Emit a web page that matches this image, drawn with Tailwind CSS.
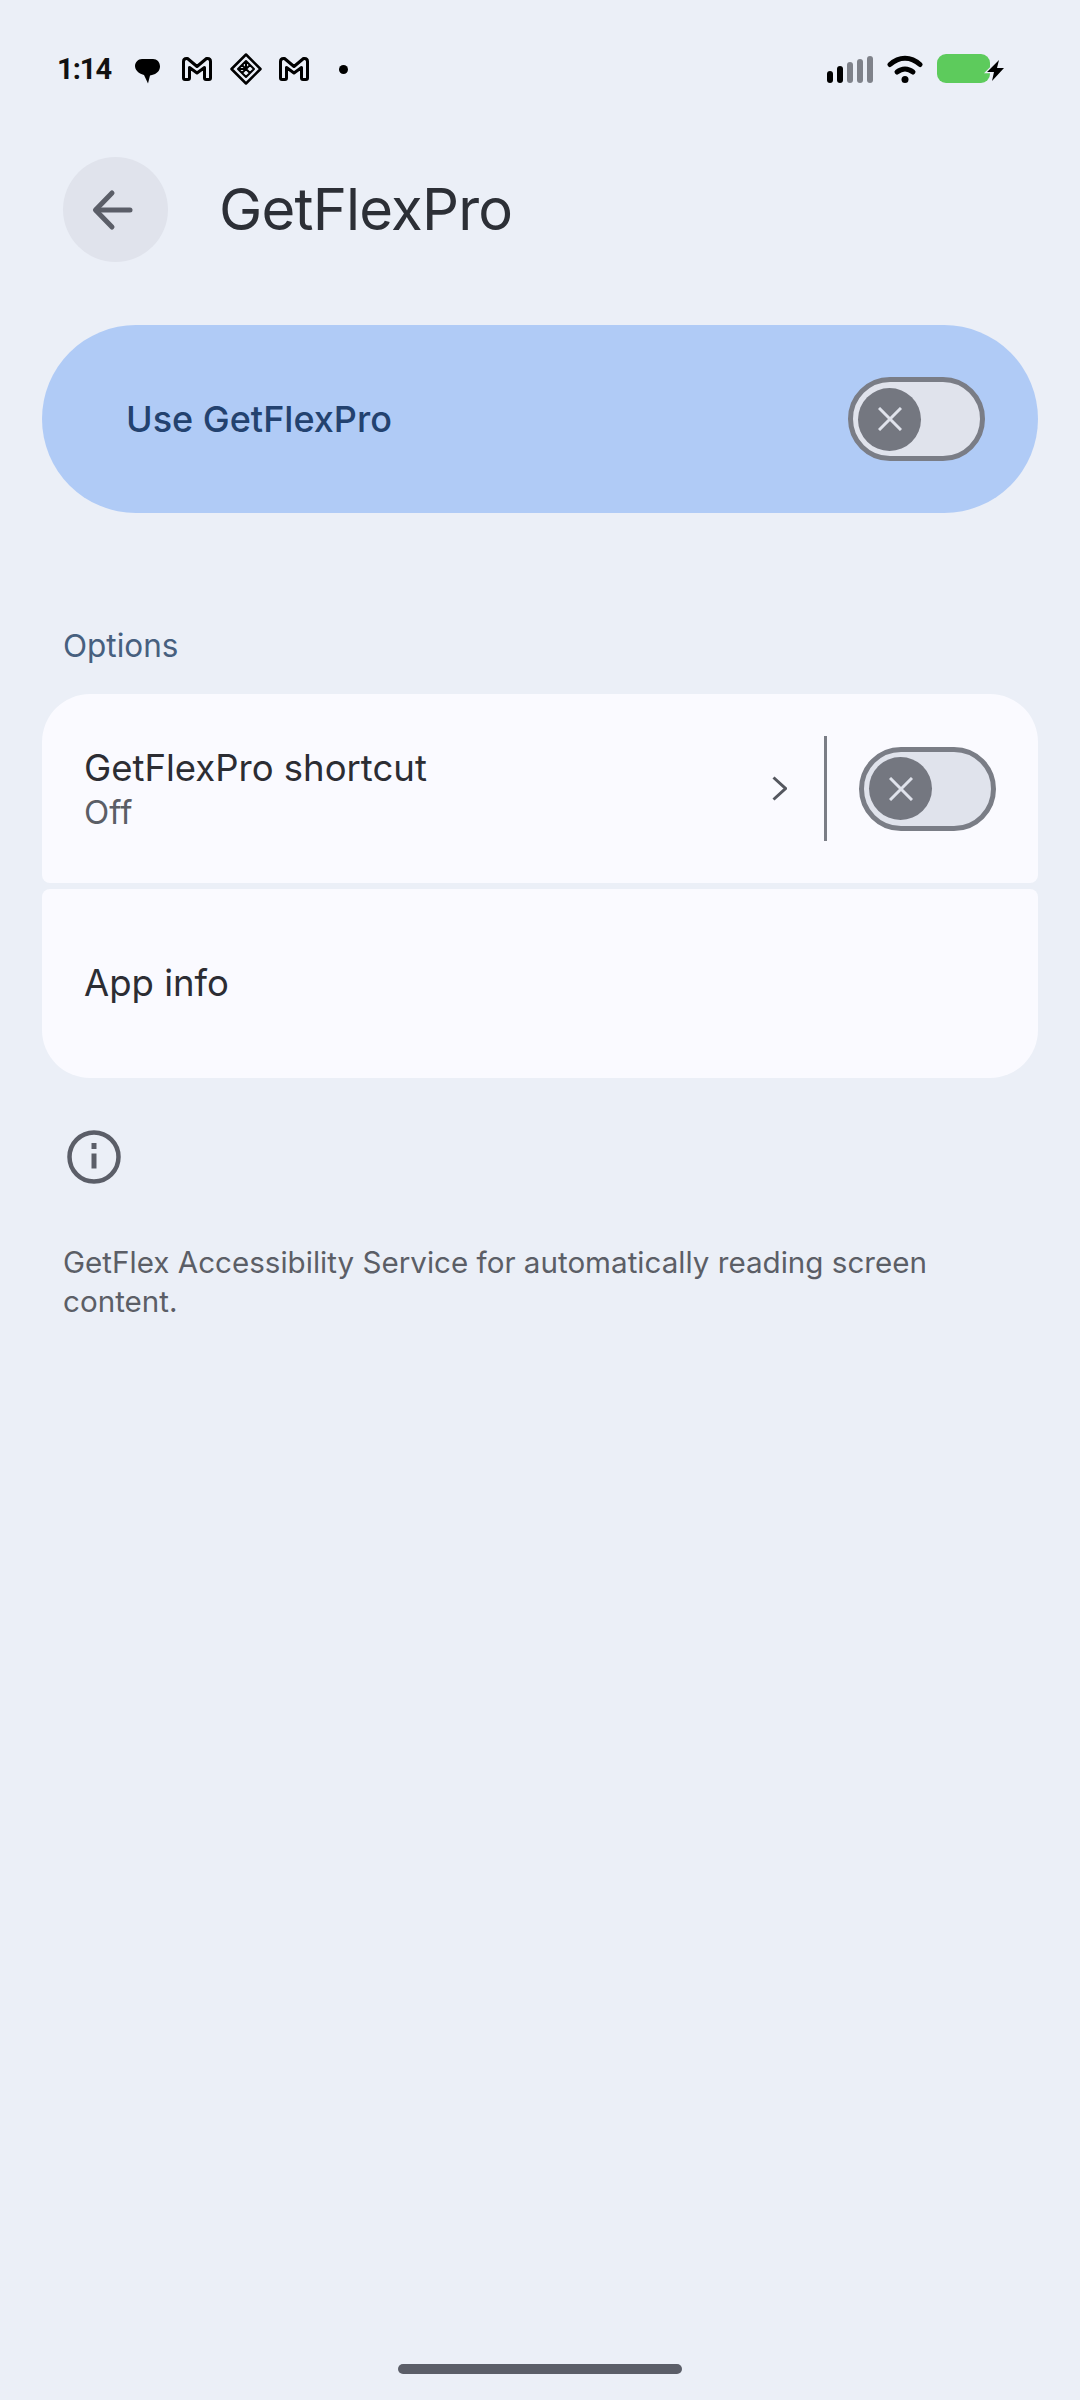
<!DOCTYPE html>
<html><head><meta charset="utf-8"><script src="https://cdn.jsdelivr.net/npm/@tailwindcss/browser@4"></script></head>
<body class="m-0">
<div class="w-[1080px] h-[2400px] bg-[#ebeff7] flex flex-col font-['Inter','Roboto',sans-serif] overflow-hidden">
  <!-- status bar -->
  <div class="h-[69px] pt-[50px] pl-[57px] pr-[75px] flex items-start justify-between shrink-0">
    <div class="flex items-center h-[38px]">
      <span class="text-[29px] leading-[38px] font-bold text-[#111] font-['Roboto',sans-serif] w-[53px] tracking-[-1px]">1:14</span>
      <svg class="w-[25px] h-[26px] ml-[25px] mt-[3px]" viewBox="0 0 25 26"><path d="M7 1h11c4 0 7 3 7 7.500S21.500 16 17 17l-2 .5-2 8-4-8.500C3 15.500 0 11.500 0 8c0-3.500 3-7 7-7z" fill="#000"/></svg>
      <svg class="w-[30px] h-[24px] ml-[22px]" viewBox="0 0 30 24" fill="none" stroke="#000" stroke-width="3" stroke-linejoin="round"><path d="M1.500 21V4.500q0-3 3-3h1L15 9.500l9.500-8h1q3 0 3 3V21q0 1.500-1.500 1.500h-3q-1.500 0-1.500-1.500V10.500L15 16l-7.500-5.500V21q0 1.500-1.500 1.500H3q-1.500 0-1.500-1.500z"/></svg>
      <svg class="w-[32px] h-[32px] ml-[18px]" viewBox="0 0 32 32" fill="none" stroke="#000" stroke-linejoin="round"><path d="M16 1.500 30.500 16 16 30.500 1.500 16z" stroke-width="2.500"/><path d="M16 8l8 8-8 8-8-8zM12 12l8 8M20 12l-8 8M16 8v8M8 16h8" stroke-width="2"/></svg>
      <svg class="w-[30px] h-[24px] ml-[17px]" viewBox="0 0 30 24" fill="none" stroke="#000" stroke-width="3" stroke-linejoin="round"><path d="M1.500 21V4.500q0-3 3-3h1L15 9.500l9.500-8h1q3 0 3 3V21q0 1.500-1.500 1.500h-3q-1.500 0-1.500-1.500V10.500L15 16l-7.500-5.500V21q0 1.500-1.500 1.500H3q-1.500 0-1.500-1.500z"/></svg>
      <div class="w-[9px] h-[9px] rounded-full bg-black ml-[30px]"></div>
    </div>
    <div class="flex items-center h-[38px]">
      <div class="flex items-end gap-[3.500px] h-[27px] mr-[14px]">
        <div class="w-[6.500px] h-[12px] rounded-full bg-black"></div>
        <div class="w-[6.500px] h-[17px] rounded-full bg-black"></div>
        <div class="w-[6.500px] h-[21px] rounded-full bg-[#7f828a]"></div>
        <div class="w-[6.500px] h-[24px] rounded-full bg-[#7f828a]"></div>
        <div class="w-[6.500px] h-[27px] rounded-full bg-[#7f828a]"></div>
      </div>
      <svg class="w-[36px] h-[28px] mr-[14px]" viewBox="0 0 36 28" fill="none" stroke="#000" stroke-width="5" stroke-linecap="round"><path d="M3 9.500c9-8.500 21-8.500 30 0"/><path d="M10 17c5-4 11-4 16 0"/><circle cx="18" cy="24.500" r="3.500" fill="#000" stroke="none"/></svg>
      <svg class="w-[68px] h-[30px] -mt-[1px]" viewBox="0 0 68 30"><rect x="0" y="0" width="53" height="29" rx="9" fill="#5dcb5c"/><path d="M62 6 50 18h7l-2 9 12-13h-7z" fill="#000" stroke="#ebeff7" stroke-width="2.500" paint-order="stroke"/></svg>
    </div>
  </div>
  <!-- header -->
  <div class="flex items-center pl-[63px] mt-[88px] shrink-0">
    <div class="w-[105px] h-[105px] rounded-full bg-[#e0e3ec] flex items-center justify-center">
      <svg class="w-[44px] h-[44px] overflow-visible" viewBox="0 0 44 44" fill="none" stroke="#5b5e68" stroke-width="5" stroke-linecap="round" stroke-linejoin="round"><path d="M36 22H2"/><path d="M18 5 1.500 22 18 39"/></svg>
    </div>
    <h1 class="ml-[51px] text-[58px] leading-[105px] text-[#2c2f36] font-normal tracking-[-0.8px]">GetFlexPro</h1>
  </div>
  <!-- main switch -->
  <div class="mx-[42px] mt-[63px] h-[188px] rounded-full bg-[#b0cbf6] flex items-center justify-between pl-[84px] pr-[53px] shrink-0">
    <span class="text-[36px] font-medium text-[#23426f]">Use GetFlexPro</span>
    <div class="w-[137px] h-[84px] rounded-full bg-[#e0e3ec] border-[5px] border-[#7a7d86] flex items-center pl-[5px]">
      <div class="w-[63px] h-[63px] rounded-full bg-[#747780] flex items-center justify-center">
        <svg class="w-[24px] h-[24px]" viewBox="0 0 24 24" stroke="#e0e3ec" stroke-width="3"><path d="M1 1l22 22M23 1 1 23"/></svg>
      </div>
    </div>
  </div>
  <p class="ml-[63px] mt-[113px] text-[31.500px] leading-[40px] text-[#47607f]">Options</p>
  <!-- card -->
  <div class="mx-[42px] mt-[28px] flex flex-col gap-[6px] shrink-0">
    <div class="h-[189px] bg-[#fafaff] rounded-t-[48px] rounded-b-[8px] flex items-center pl-[42px] pr-[42px]">
      <div class="flex-1 pt-[2px]">
        <p class="text-[36.500px] leading-[44px] text-[#2c2d33]">GetFlexPro shortcut</p>
        <p class="text-[33px] leading-[44px] text-[#5b5e66]">Off</p>
      </div>
      <svg class="w-[15px] h-[25px] mr-[37px]" viewBox="0 0 15 25" fill="none" stroke="#54575f" stroke-width="3"><path d="M1.500 1.500l12 11-12 11"/></svg>
      <div class="w-[3px] h-[105px] bg-[#7a7d86] mr-[32px]"></div>
      <div class="w-[137px] h-[84px] rounded-full bg-[#e0e3ec] border-[5px] border-[#7a7d86] flex items-center pl-[5px]">
        <div class="w-[63px] h-[63px] rounded-full bg-[#747780] flex items-center justify-center">
          <svg class="w-[24px] h-[24px]" viewBox="0 0 24 24" stroke="#e0e3ec" stroke-width="3"><path d="M1 1l22 22M23 1 1 23"/></svg>
        </div>
      </div>
    </div>
    <div class="h-[189px] bg-[#fafaff] rounded-t-[8px] rounded-b-[48px] flex items-center pl-[42px]">
      <p class="text-[36.500px] text-[#2c2d33]">App info</p>
    </div>
  </div>
  <!-- footer info -->
  <svg class="ml-[66px] mt-[51px] w-[56px] h-[56px] shrink-0" viewBox="0 0 56 56" fill="none"><circle cx="28" cy="28" r="24.500" stroke="#5b5e68" stroke-width="4.500"/><path d="M28 24.500v15" stroke="#5b5e68" stroke-width="5"/><path d="M28 14v6" stroke="#5b5e68" stroke-width="5"/></svg>
  <p class="ml-[63px] mr-[100px] mt-[58px] text-[29.600px] leading-[39px] text-[#5b5e66]">GetFlex Accessibility Service for automatically reading screen content.</p>
  <!-- home bar -->
  <div class="mt-auto mb-[26px] mx-auto w-[284px] h-[10px] rounded-full bg-[#5b5e68]"></div>
</div>
</body></html>
